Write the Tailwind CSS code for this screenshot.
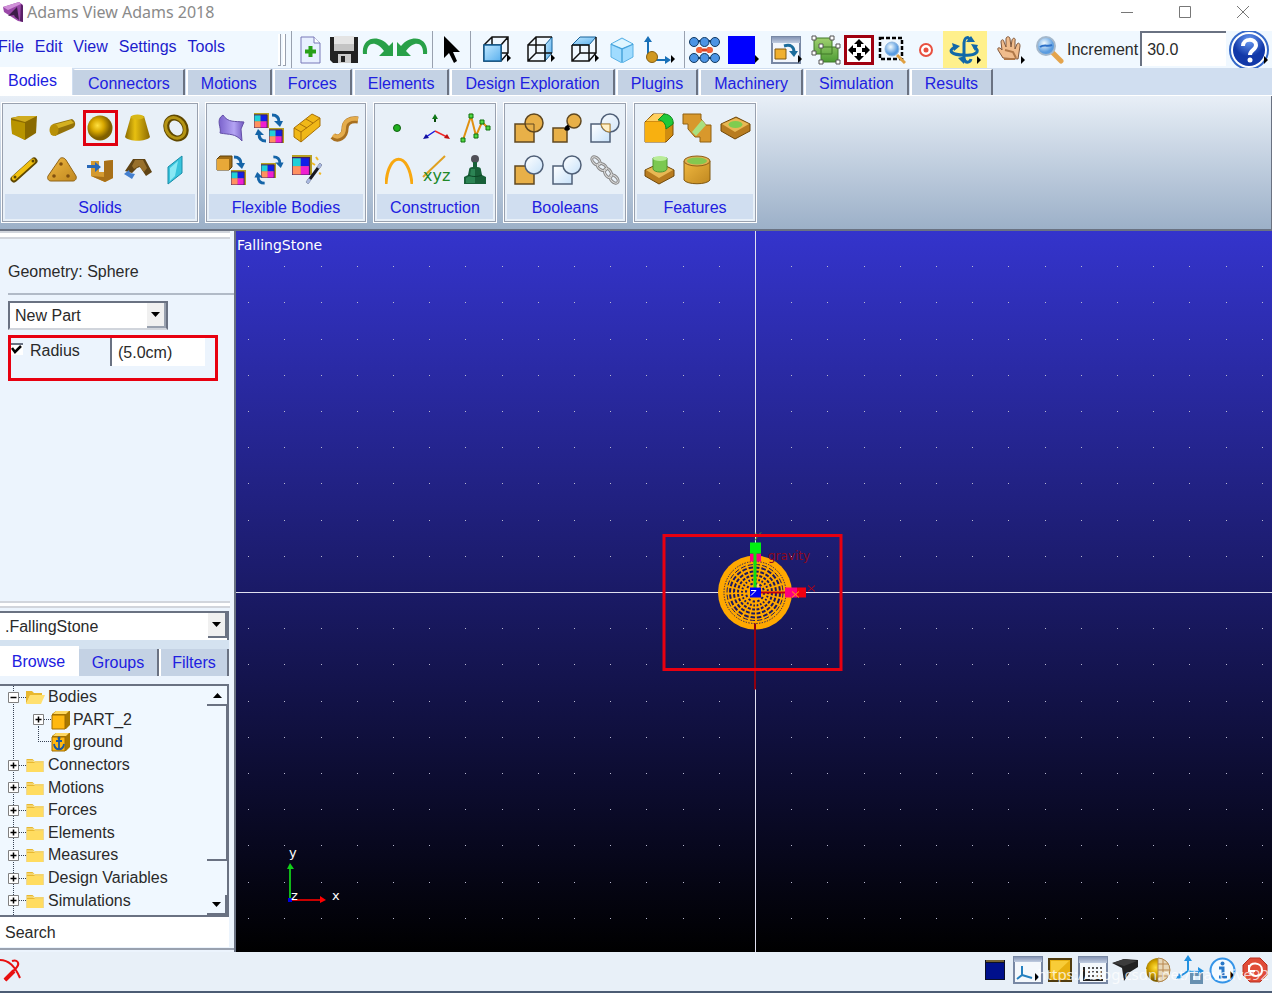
<!DOCTYPE html>
<html lang="en">
<head>
    <meta charset="UTF-8">
    <meta name="viewport" content="width=device-width, initial-scale=1.0">
    <title>Adams View Adams 2018</title>
    <script src="https://cdn.jsdelivr.net/npm/@tailwindcss/browser@4"></script>
</head>
<body class="font-['Liberation_Sans',Arial,sans-serif] text-base text-[#2a2a2a] bg-[#e8eef8] h-screen flex flex-col overflow-hidden">

    <!-- Shared icon parts -->
    <svg class="absolute w-0 h-0" aria-hidden="true">
        <defs>
            <linearGradient id="gold" x1="0" x2="1"><stop offset="0" stop-color="#8a6a00"/><stop offset=".4" stop-color="#e8c010"/><stop offset="1" stop-color="#8a6800"/></linearGradient>
            <linearGradient id="tan" x1="0" x2="1" y2="1"><stop offset="0" stop-color="#f0b840"/><stop offset="1" stop-color="#c08820"/></linearGradient>
            <radialGradient id="ball" cx=".4" cy=".4"><stop offset="0" stop-color="#ffe040"/><stop offset=".5" stop-color="#d8a800"/><stop offset="1" stop-color="#806000"/></radialGradient>
            <linearGradient id="ice" x1="0" x2="1" y2="1"><stop offset="0" stop-color="#fff"/><stop offset="1" stop-color="#c8e2fa"/></linearGradient>
            <linearGradient id="sky" x1="0" x2="1" y2="1"><stop offset="0" stop-color="#c0e8ff"/><stop offset="1" stop-color="#5ab0ee"/></linearGradient>
            <linearGradient id="leaf" x1="0" y1="0" x2="0" y2="1"><stop offset="0" stop-color="#a0d070"/><stop offset="1" stop-color="#4c9c34"/></linearGradient>
            <radialGradient id="lens" cx=".4" cy=".35"><stop offset="0" stop-color="#f4fcff"/><stop offset="1" stop-color="#5a9ce0"/></radialGradient>
            <radialGradient id="help" cx=".5" cy=".2"><stop offset="0" stop-color="#6a9cf4"/><stop offset="1" stop-color="#1238a8"/></radialGradient>
            <linearGradient id="violet" x1="0" x2="1"><stop offset="0" stop-color="#7a62cc"/><stop offset=".6" stop-color="#b4a4f4"/><stop offset="1" stop-color="#7058c0"/></linearGradient>
            <linearGradient id="wintop" x1="0" y1="0" x2="0" y2="1"><stop offset="0" stop-color="#8494b4"/><stop offset="1" stop-color="#c0cce0"/></linearGradient>
        </defs>
        <symbol id="swatch" viewBox="0 0 16 16">
            <rect width="16" height="16" fill="#b8a020"/><rect y="2" width="7" height="7" fill="#20d0d8"/><rect x="7" y="2" width="7" height="7" fill="#1020e8"/><rect y="9" width="7" height="7" fill="#ff9060"/><rect x="7" y="9" width="7" height="7" fill="#f020d0"/><path d="M0 2h14v14H0z" fill="none" stroke="#402060" stroke-width="1"/>
        </symbol>
        <symbol id="turn" viewBox="0 0 12 14">
            <path d="M1 2c5 0 7 3 7 7" fill="none" stroke="#1464a8" stroke-width="3"/><path d="M3 8h9l-3 6z" fill="#1464a8"/>
        </symbol>
        <symbol id="more" viewBox="0 0 4 8"><path d="M0 0l4 4-4 4z" fill="#000"/></symbol>
        <symbol id="folder" viewBox="0 0 18 16">
            <path d="M.5 2h6l2 2h9v11H.5z" fill="#e8b830"/><path d="M1 6h16v9H1z" fill="#ffdc60"/><path d="M1 4h6l2 1h8" stroke="#fff0a8" fill="none"/>
        </symbol>
        <symbol id="plus" viewBox="0 0 11 11"><path d="M.5.5h10v10H.5z" fill="#fff" stroke="#808080"/><path d="M2.500 5.500h6M5.500 2.500v6" stroke="#000" stroke-width="1.500"/></symbol>
        <symbol id="minus" viewBox="0 0 11 11"><path d="M.5.5h10v10H.5z" fill="#fff" stroke="#808080"/><path d="M2.500 5.500h6" stroke="#000" stroke-width="1.500"/></symbol>
        <symbol id="part" viewBox="0 0 20 20"><path d="M1 4l4-3h14v14l-4 4H1z" fill="#a87800"/><path d="M1 5h13v14H1z" fill="#ffb810" stroke="#a06c00"/><path d="M2 4l3-3h13l-3 3z" fill="#ffd860"/></symbol>
    </svg>

    <!-- Title bar -->
    <header class="h-[31px] shrink-0 bg-white flex items-start justify-between">
        <div class="flex items-center gap-1 pl-[3px] h-6">
            <svg class="w-5 h-5" viewBox="0 0 20 20"><path d="M0 5l16-5 4 3v17l-5-1L1 10z" fill="#9a48a8"/><path d="M0 5l16-5 2 2L5 8z" fill="#d090d8"/><path d="M5 14l9-9 2 13-4-3-1-2z" fill="#3c1c48"/><path d="M18 2l2 2v16l-3-1z" fill="#5a2068"/></svg>
            <h1 class="font-['Noto_Sans',sans-serif] text-base leading-6 text-[#8a8a8a]">Adams View Adams 2018</h1>
        </div>
        <div class="flex h-6 items-center pr-[7px]">
            <button aria-label="Minimize" class="px-[23px]"><svg class="w-3 h-3" viewBox="0 0 12 12"><path d="M0 6.500h12" stroke="#777"/></svg></button>
            <button aria-label="Maximize" class="px-[23px]"><svg class="w-3 h-3" viewBox="0 0 12 12"><path d="M.5.5h11v11H.5z" fill="none" stroke="#777"/></svg></button>
            <button aria-label="Close" class="pl-[23px] pr-4"><svg class="w-3 h-3" viewBox="0 0 12 12"><path d="M0 0l12 12M12 0L0 12" stroke="#777"/></svg></button>
        </div>
    </header>

    <!-- Menu and toolbar -->
    <div class="h-[37px] shrink-0 bg-[#f0f8ff] flex items-center overflow-hidden">
        <nav class="flex gap-[11px] w-[278px] shrink-0 pb-[6px] text-[#1c1ccc]">
            <a href="#" class="-ml-[2px]">File</a>
            <a href="#">Edit</a>
            <a href="#">View</a>
            <a href="#">Settings</a>
            <a href="#">Tools</a>
        </nav>
        <div class="flex gap-[2px] w-[13px] shrink-0 h-8"><i class="w-[3px] border-r border-b border-gray-400 bg-white"></i><i class="w-[3px] border-r border-b border-gray-400 bg-white"></i></div>

        <div class="flex h-full items-center border-l border-gray-400 pl-px pr-[3px] shrink-0">
            <button aria-label="New" class="w-[34px] flex justify-center"><svg class="w-[21px] h-7" viewBox="0 0 21 28"><path d="M1 1h13l6 6v20H1z" fill="#e8f0ff" stroke="#7878b8"/><path d="M14 1v6h6" fill="#fff" stroke="#7878b8"/><path d="M10.500 10v11M5 15.500h11" stroke="#28a018" stroke-width="4"/></svg></button>
            <button aria-label="Save" class="w-[34px] flex justify-center"><svg class="w-7 h-7" viewBox="0 0 28 28"><path d="M0 1h28v26H3l-3-3z" fill="#222"/><path d="M4 0h20v15H4z" fill="#e4e4e4"/><path d="M4 8h20v7H4z" fill="#c4c4c4"/><path d="M8 18h13v9H8z" fill="#ccc"/><path d="M11 20h4v6h-4z" fill="#222"/></svg></button>
            <button aria-label="Redo" class="w-[34px] flex justify-center"><svg class="w-8 h-7" viewBox="0 0 32 28"><path d="M1 18C-1 2 16-3 27 10l4-4v14H17l5-5C14 4 4 6 5 18z" fill="#28a048"/></svg></button>
            <button aria-label="Undo" class="w-[34px] flex justify-center"><svg class="w-8 h-7" viewBox="0 0 32 28"><path d="M31 18C33 2 16-3 5 10L1 6v14h14l-5-5C18 4 28 6 27 18z" fill="#28a048"/></svg></button>
        </div>
        <div class="flex h-full items-center border-l border-gray-400 w-[38px] justify-center shrink-0">
            <button aria-label="Select"><svg class="w-4 h-7" viewBox="0 0 16 28"><path d="M0 0v22l5-5 5 10 3-2-4-9h7z" fill="#000"/></svg></button>
        </div>
        <div class="flex h-full items-center border-l border-gray-400 pl-1 w-[214px] shrink-0">
            <button aria-label="Front view" class="w-11 flex justify-center"><svg class="w-7 h-7" viewBox="0 0 28 28"><path d="M1 9l8-8h16v16l-7 8H1zM18 9l7-8M9 1v16h16M9 17l-8 8M1 9h17v16" fill="none" stroke="#111" stroke-width="1.500"/><path d="M1 9h17v16H1z" fill="url(#sky)" stroke="#146098" stroke-width="1.500"/><use href="#more" x="24" y="18" width="4" height="8"/></svg></button>
            <button aria-label="Right view" class="w-11 flex justify-center"><svg class="w-7 h-7" viewBox="0 0 28 28"><path d="M18 9l7-8v16l-7 8z" fill="url(#sky)" stroke="#146098"/><path d="M1 9l8-8h16M1 9h17v16H1zM9 1v16h16M9 17l-8 8" fill="none" stroke="#111" stroke-width="1.500"/><use href="#more" x="24" y="18" width="4" height="8"/></svg></button>
            <button aria-label="Top view" class="w-11 flex justify-center"><svg class="w-7 h-7" viewBox="0 0 28 28"><path d="M1 9l8-8h16l-7 8z" fill="url(#sky)" stroke="#146098"/><path d="M1 9v16h17V9M25 1v16l-7 8M9 9v8h16M9 17l-8 8M1 9h17" fill="none" stroke="#111" stroke-width="1.500"/><use href="#more" x="24" y="18" width="4" height="8"/></svg></button>
            <button aria-label="Isometric view" class="w-[30px] flex justify-center"><svg class="w-6 h-[26px]" viewBox="0 0 24 26"><path d="M1 7l11-6 11 6v13l-11 6-11-6z" fill="#a0dcff" stroke="#58b0e4"/><path d="M1 7l11 5 11-5M12 12v13" stroke="#48a4dc" stroke-width="1.500" fill="none"/><path d="M2 7l10-5 10 5-10 4z" fill="#e0f6ff"/></svg></button>
            <button aria-label="View orientation" class="w-11 flex justify-center"><svg class="w-8 h-7" viewBox="0 0 32 28"><path d="M5 22V5M8 24h16" stroke="#1870b8" stroke-width="2" fill="none"/><path d="M1 6l4-6 4 6zM22 20l6 4-6 4z" fill="#1870b8"/><circle cx="9" cy="21" r="5.500" fill="#d09820" stroke="#886010"/><use href="#more" x="28" y="19" width="4" height="8"/></svg></button>
        </div>
        <div class="flex h-full items-center border-l border-gray-400 pl-[2px] shrink-0">
            <button aria-label="Grid" class="w-[34px] flex justify-center"><svg class="w-[31px] h-7" viewBox="0 0 31 28"><path d="M5 5h21M5 22h21" stroke="#123c70" stroke-width="2"/><path d="M9 14h13M11 11v6M20 11v6" stroke="#e04020" stroke-width="3"/><g fill="#4c94e4" stroke="#103860"><circle cx="5" cy="6" r="4.500"/><circle cx="15.500" cy="6" r="4.500"/><circle cx="26" cy="6" r="4.500"/><circle cx="5" cy="22" r="4.500"/><circle cx="15.500" cy="22" r="4.500"/><circle cx="26" cy="22" r="4.500"/></g><circle cx="10" cy="14" r="3" fill="#f06038"/><circle cx="21" cy="14" r="3" fill="#f06038"/></svg></button>
            <button aria-label="Background color" class="w-11 flex justify-center"><svg class="w-[31px] h-7" viewBox="0 0 31 28"><path d="M0 0h27v28H0z" fill="#00f"/><use href="#more" x="27" y="19" width="4" height="8"/></svg></button>
            <button aria-label="Render" class="w-11 flex justify-center"><svg class="w-8 h-7" viewBox="0 0 32 28"><path d="M1 1h28v26H1z" fill="#f2f6fc" stroke="#7888a4" stroke-width="2"/><path d="M1 1h28v6H1z" fill="url(#wintop)"/><path d="M4 13h11v10H4z" fill="#f0b030" stroke="#805810"/><path d="M13 10c7-2 10 1 10 6" fill="none" stroke="#1c6c9c" stroke-width="3"/><path d="M18 15h9l-4 6z" fill="#1c6c9c"/><use href="#more" x="27" y="19" width="4" height="8"/></svg></button>
            <button aria-label="Group" class="w-[34px] flex justify-center"><svg class="w-[30px] h-[30px]" viewBox="0 0 30 30"><path d="M3 3h18v16H3zM10 12h17v15H10z" fill="url(#leaf)" stroke="#407828"/><g fill="#fff" stroke="#555"><path d="M1 1h4v4H1zM19 1h4v4h-4zM1 16h4v4H1zM8 9h4v4H8zM25 9h4v4h-4zM8 25h4v4H8zM25 25h4v4h-4z"/></g></svg></button>
            <button aria-label="Fit view" class="w-8 flex justify-center"><svg class="w-[30px] h-[30px]" viewBox="0 0 30 30"><path d="M1.500 1.500h27v27h-27z" fill="#fff" stroke="#a00010" stroke-width="3"/><path d="M15 4l5 5h-3v3h-4V9h-3zM15 26l5-5h-3v-3h-4v3h-3zM4 15l5-5v3h3v4H9v3zM26 15l-5-5v3h-3v4h3v3z" fill="#000"/></svg></button>
            <button aria-label="Zoom box" class="w-[34px] flex justify-center"><svg class="w-7 h-7" viewBox="0 0 28 28"><path d="M2 2h22v21H2z" fill="none" stroke="#000" stroke-width="2.500" stroke-dasharray="4 2"/><path d="M19 19l8 8" stroke="#e0a040" stroke-width="3"/><circle cx="14" cy="13" r="7" fill="url(#lens)" stroke="#90b8e0"/></svg></button>
            <button aria-label="Center" class="w-[34px] flex justify-center"><svg class="w-3.5 h-3.5" viewBox="0 0 14 14"><circle cx="7" cy="7" r="6" fill="#fff" stroke="#e85040" stroke-width="2"/><circle cx="7" cy="7" r="2.500" fill="#e85040"/></svg></button>
            <button aria-label="Rotate" class="w-11 h-[37px] flex justify-center items-center bg-[#fff08c]"><svg class="w-8 h-8" viewBox="0 0 32 32"><path d="M21 8C20 2 16 2 15 9v15c1 6 6 5 7 1M6 13c-8 4-3 8 9 8 12 1 17-4 10-8" fill="none" stroke="#1268a8" stroke-width="3"/><path d="M17 8h9l-4-6zM3 9l8 3-6 5zM9 24l7-2-1 8zM22 10l7 1-3 6z" fill="#1268a8"/><use href="#more" x="28" y="22" width="4" height="8"/></svg></button>
            <button aria-label="Pan" class="w-12 flex justify-center"><svg class="w-7 h-7" viewBox="0 0 28 28"><path d="M6 22L1 14c-1-3 2-3 4 0L4 6c0-3 3-3 3 0l2 5V3c0-3 4-3 4 0l1 8 1-7c1-3 4-2 3 1v8l2-5c2-2 3 0 3 2l-2 13z" fill="#f0bc8c" stroke="#80583c"/><path d="M8 14l8 2 3 6M7 23h11" stroke="#b07848" fill="none" stroke-width="2"/><use href="#more" x="24" y="20" width="4" height="8"/></svg></button>
            <button aria-label="Zoom" class="w-[30px] flex justify-center"><svg class="w-7 h-7" viewBox="0 0 28 28"><path d="M16 16l9 9" stroke="#e4a44c" stroke-width="5" stroke-linecap="round"/><circle cx="10" cy="10" r="9" fill="url(#lens)" stroke="#a4b8cc" stroke-width="2"/><path d="M4 11c4-3 8 0 12-2" stroke="#2c70c8" stroke-width="2" fill="none"/></svg></button>
        </div>
        <label for="increment" class="pl-[2px] pr-[2px] shrink-0">Increment</label>
        <input id="increment" type="text" value="30.0" class="h-[35px] w-[86px] shrink-0 self-start border-t-2 border-l-2 border-gray-500 bg-white pl-[5px] outline-none">
        <button aria-label="Help" class="ml-[3px] shrink-0"><svg class="w-10 h-[38px]" viewBox="0 0 40 38"><circle cx="20" cy="19" r="19" fill="#fff" stroke="#3468c8" stroke-width="2"/><circle cx="20" cy="19" r="16" fill="url(#help)"/><path d="M14 15c0-8 13-8 13-1 0 5-6 5-6 10" fill="none" stroke="#fff" stroke-width="4"/><circle cx="21" cy="29" r="2.500" fill="#fff"/><use href="#more" x="35" y="25" width="4" height="8"/></svg></button>
    </div>

    <!-- Ribbon tabs -->
    <nav class="h-7 shrink-0 bg-[#d0def0] flex items-end gap-px text-[#2020e0] leading-7 border-b border-white">
        <a href="#" class="bg-white w-[72px] pl-2 h-7">Bodies</a>
        <a href="#" class="bg-[#c4d2e4] px-[13px] border-l-2 border-t border-[#c4d2e4] border-t-white border-r-2 border-r-gray-500 h-[26px]">Connectors</a>
        <a href="#" class="bg-[#c4d2e4] px-[13px] border-l-2 border-t border-white border-r-2 border-r-gray-500 h-[26px]">Motions</a>
        <a href="#" class="bg-[#c4d2e4] px-[13px] border-l-2 border-t border-white border-r-2 border-r-gray-500 h-[26px]">Forces</a>
        <a href="#" class="bg-[#c4d2e4] px-[13px] border-l-2 border-t border-white border-r-2 border-r-gray-500 h-[26px]">Elements</a>
        <a href="#" class="bg-[#c4d2e4] px-[13px] border-l-2 border-t border-white border-r-2 border-r-gray-500 h-[26px]">Design Exploration</a>
        <a href="#" class="bg-[#c4d2e4] px-[13px] border-l-2 border-t border-white border-r-2 border-r-gray-500 h-[26px]">Plugins</a>
        <a href="#" class="bg-[#c4d2e4] px-[13px] border-l-2 border-t border-white border-r-2 border-r-gray-500 h-[26px]">Machinery</a>
        <a href="#" class="bg-[#c4d2e4] px-[13px] border-l-2 border-t border-white border-r-2 border-r-gray-500 h-[26px]">Simulation</a>
        <a href="#" class="bg-[#c4d2e4] px-[13px] border-l-2 border-t border-white border-r-2 border-r-gray-500 h-[26px]">Results</a>
    </nav>

    <!-- Ribbon -->
    <div class="h-[135px] shrink-0 bg-linear-to-b from-[#e8eff7] to-[#9cb0c8] border-b-2 border-r border-gray-500 flex items-start gap-[6px] pt-[6px] pl-px">
        <section class="border border-white">
            <div class="border border-gray-400 bg-[#e8f0f8] p-[2px]">
                <div class="grid grid-cols-5 justify-items-center pt-px">
                    <button aria-label="Box" class="w-[38px] h-[42px] flex items-center justify-center"><svg class="w-7 h-7" viewBox="0 0 28 28"><path d="M1 4l9-2h17l-1 17-11 7-13-7z" fill="#8a6a00"/><path d="M1 6l14 3v17L2 20z" fill="#b89400"/><path d="M1 4l9-2h17l-12 6z" fill="#d0ac20"/></svg></button>
                    <button aria-label="Cylinder" class="w-[38px] h-[42px] flex items-center justify-center"><svg class="w-7 h-7" viewBox="0 0 28 28"><path d="M5 10l19-5c4 2 4 7 1 9L7 22z" fill="#94720a"/><path d="M5 11l18-5 3 3-18 6z" fill="#d4b020"/><ellipse cx="6" cy="16" rx="4.500" ry="6" fill="#b89008"/></svg></button>
                    <button aria-label="Sphere" class="w-[35px] h-9 my-[3px] flex items-center justify-center border-[3px] border-[#e00010]"><svg class="w-[26px] h-[26px]" viewBox="0 0 26 26"><circle cx="13" cy="13" r="12.500" fill="url(#ball)"/></svg></button>
                    <button aria-label="Frustum" class="w-[38px] h-[42px] flex items-center justify-center"><svg class="w-7 h-7" viewBox="0 0 28 28"><path d="M7 2h13l6 21c-4 5-21 5-25 0z" fill="url(#gold)"/><ellipse cx="13.500" cy="3" rx="6.500" ry="2.500" fill="#d8b818"/></svg></button>
                    <button aria-label="Torus" class="w-[38px] h-[42px] flex items-center justify-center"><svg class="w-7 h-7" viewBox="0 0 28 28"><ellipse cx="14" cy="14" rx="9" ry="11" transform="rotate(-35 14 14)" fill="none" stroke="#604800" stroke-width="6"/><ellipse cx="13.500" cy="13.500" rx="9" ry="11" transform="rotate(-35 14 14)" fill="none" stroke="#b49414" stroke-width="3"/></svg></button>
                    <button aria-label="Link" class="w-[38px] h-[42px] flex items-center justify-center"><svg class="w-7 h-7" viewBox="0 0 28 28"><path d="M4 23L24 5" stroke="#604800" stroke-width="7" stroke-linecap="round"/><path d="M4 22L23 5" stroke="#f0c010" stroke-width="4.500" stroke-linecap="round"/><circle cx="5" cy="21" r="1.500" fill="#604800"/><circle cx="23" cy="5" r="1.500" fill="#604800"/></svg></button>
                    <button aria-label="Plate" class="w-[38px] h-[42px] flex items-center justify-center"><svg class="w-[30px] h-7" viewBox="0 0 30 28"><path d="M12 4c1-3 5-3 7 0l10 16c1 3-1 5-3 5H4c-3 0-4-3-3-5z" fill="url(#tan)" stroke="#906418"/><g fill="#805010"><circle cx="14" cy="8" r="1.800"/><circle cx="7" cy="20" r="1.800"/><circle cx="21" cy="20" r="1.800"/></g></svg></button>
                    <button aria-label="Extrusion" class="w-[38px] h-[42px] flex items-center justify-center"><svg class="w-7 h-7" viewBox="0 0 28 28"><path d="M5 5h8v11h5V5l9-1v18l-8 4-14-6z" fill="#d49a30"/><path d="M18 5l9-1v18l-8 4-14-6 13 1z" fill="#a87018"/><path d="M1 9h8V6l6 5-6 5v-4H1z" fill="#2868b8"/></svg></button>
                    <button aria-label="Revolution" class="w-[38px] h-[42px] flex items-center justify-center"><svg class="w-7 h-7" viewBox="0 0 28 28"><path d="M9 3h12l7 13-6 4-6-9-3 1-5 5-7-2z" fill="#604414"/><path d="M11 4h8l4 8-3 4-5-6-5 3-2-3z" fill="#98702c"/><path d="M0 18l5-4 1 3 5 1-3 5z" fill="#4480d0"/></svg></button>
                    <button aria-label="Plane" class="w-[38px] h-[42px] flex items-center justify-center"><svg class="w-7 h-[30px]" viewBox="0 0 28 30"><path d="M6 12L20 1v17L6 29z" fill="#38c4dc" stroke="#188ca8"/><path d="M8 13l8-7-3 15-5 5z" fill="#88e8f4"/></svg></button>
                </div>
                <h2 class="bg-[#d0def0] mt-[3px] h-[25px] leading-[27px] text-center text-[#2020e0]">Solids</h2>
            </div>
        </section>

        <section class="border border-white">
            <div class="border border-gray-400 bg-[#e8f0f8] p-[2px]">
                <div class="grid grid-cols-4 pt-px px-px">
                    <button aria-label="Flexible surface" class="w-[38px] h-[42px] flex items-center justify-center pl-1"><svg class="w-7 h-7" viewBox="0 0 28 28"><path d="M6 1c5 8 12 6 21 7l-3 7 1 12c-7-8-12-6-22-8 2-5-5-13 3-18z" fill="url(#violet)" stroke="#6450a8"/></svg></button>
                    <button aria-label="Flex to flex" class="w-[38px] h-[42px] flex items-center justify-center pl-1"><svg class="w-[30px] h-[30px]" viewBox="0 0 30 30"><use href="#swatch" width="15" height="15"/><use href="#swatch" x="15" y="15" width="15" height="15"/><use href="#turn" x="17" y="0" width="12" height="14"/><use href="#turn" width="12" height="14" transform="translate(13 30) rotate(180)"/></svg></button>
                    <button aria-label="Beam" class="w-[38px] h-[42px] flex items-center justify-center pl-1"><svg class="w-7 h-[30px]" viewBox="0 0 28 30"><path d="M1 15L19 1l8 4v8L8 29l-7-5z" fill="#f0b818" stroke="#a87008"/><path d="M1 15l7 4L27 5M8 19v10M7 11l7 4M13 6l7 4" fill="none" stroke="#a87008"/></svg></button>
                    <button aria-label="Flexible link" class="w-[38px] h-[42px] flex items-center justify-center pl-1"><svg class="w-[30px] h-7" viewBox="0 0 30 28"><path d="M3 22c5 5 12 0 12-7S20 5 28 6" fill="none" stroke="#a87020" stroke-width="7"/><path d="M3 21c5 4 11 0 11-7S20 4 28 5" fill="none" stroke="#e4ac4c" stroke-width="4"/></svg></button>
                    <button aria-label="Rigid to flex" class="w-[38px] h-[42px] flex items-center justify-center pl-1"><svg class="w-[30px] h-[30px]" viewBox="0 0 30 30"><path d="M1 4l3-3h12v11l-3 3H1z" fill="#a06c14" stroke="#604008"/><path d="M1 4h12v11H1z" fill="#e8a838"/><use href="#swatch" x="15" y="15" width="15" height="15"/><use href="#turn" x="17" y="0" width="12" height="14"/></svg></button>
                    <button aria-label="Flex swap" class="w-[38px] h-[42px] flex items-center justify-center pl-1"><svg class="w-[30px] h-[30px]" viewBox="0 0 30 30"><use href="#swatch" x="7" y="8" width="15" height="15"/><use href="#turn" x="18" y="0" width="12" height="13"/><use href="#turn" width="12" height="13" transform="translate(12 30) rotate(180)"/></svg></button>
                    <button aria-label="Flex wizard" class="w-[38px] h-[42px] flex items-center justify-center pl-1"><svg class="w-[30px] h-[30px]" viewBox="0 0 30 30"><use href="#swatch" width="20" height="20"/><path d="M15 28L29 9" stroke="#181820" stroke-width="3"/><path d="M26 13l3-4M15 28l3-4" stroke="#a8b8e0" stroke-width="3"/><path d="M24 2l2 3M27 18l2 1M20 8l3 2" stroke="#f0b828" stroke-width="2"/></svg></button>
                </div>
                <h2 class="bg-[#d0def0] mt-[3px] h-[25px] leading-[27px] text-center text-[#2020e0]">Flexible Bodies</h2>
            </div>
        </section>

        <section class="border border-white">
            <div class="border border-gray-400 bg-[#e8f0f8] p-[2px]">
                <div class="grid grid-cols-3 pt-px px-px">
                    <button aria-label="Point" class="w-[38px] h-[42px] flex items-center justify-center"><svg class="w-2 h-2" viewBox="0 0 8 8"><circle cx="4" cy="4" r="3.500" fill="#20b020" stroke="#106010"/></svg></button>
                    <button aria-label="Marker" class="w-[38px] h-[42px] flex items-center justify-center pl-1"><svg class="w-7 h-7" viewBox="0 0 28 28"><path d="M12 3v5" stroke="#084808" stroke-width="2"/><path d="M9 5l3-5 3 5z" fill="#107818"/><path d="M12 17L3 23" stroke="#1818e0" stroke-width="1.500"/><path d="M0 25l3-5 3 4z" fill="#1010a0"/><path d="M12 17l12 6" stroke="#f02828" stroke-width="1.500"/><path d="M27 25l-3-5-3 4z" fill="#c01010"/></svg></button>
                    <button aria-label="Polyline" class="w-[38px] h-[42px] flex items-center justify-center pl-1"><svg class="w-[31px] h-[30px]" viewBox="0 0 31 30"><path d="M3 27l8-24 5 20 6-14 6 6" fill="none" stroke="#e09010" stroke-width="2"/><g fill="#50d840" stroke="#107010"><path d="M1 25h4v4H1zM9 1h4v4H9zM14 21h4v4h-4zM20 7h4v4h-4zM26 13h4v4h-4z"/></g></svg></button>
                    <button aria-label="Arc" class="w-[38px] h-[42px] flex items-center justify-center pl-1"><svg class="w-7 h-7" viewBox="0 0 28 28"><path d="M1 28C3-5 24-5 27 28" fill="none" stroke="#f8a810" stroke-width="3"/></svg></button>
                    <button aria-label="Spline" class="w-[38px] h-[42px] flex items-center justify-center pl-1"><svg class="w-[30px] h-[30px]" viewBox="0 0 30 30"><path d="M1 22L23 1" stroke="#e0a020" stroke-width="2"/><text x="1" y="26" font-size="16" fill="#208828" font-family="DejaVu Sans">xyz</text></svg></button>
                    <button aria-label="Point mass" class="w-[38px] h-[42px] flex items-center justify-center pl-1"><svg class="w-6 h-[30px]" viewBox="0 0 24 30"><circle cx="12" cy="4" r="4" fill="#505058"/><path d="M10 7h4v5c3 0 4 1 4 3l1 5 4 2v7H1v-7l4-2 1-5c0-2 1-3 4-3z" fill="#186038"/><path d="M8 14h4v14H3v-5l4-2z" fill="#2c8454"/><path d="M5 20c4 2 10 2 14 0" stroke="#0c4424" fill="none"/></svg></button>
                </div>
                <h2 class="bg-[#d0def0] mt-[3px] h-[25px] leading-[27px] text-center text-[#2020e0]">Construction</h2>
            </div>
        </section>

        <section class="border border-white">
            <div class="border border-gray-400 bg-[#e8f0f8] p-[2px]">
                <div class="grid grid-cols-3 pt-px px-px">
                    <button aria-label="Unite" class="w-[38px] h-[42px] flex items-center justify-center pl-1"><svg class="w-[30px] h-[30px]" viewBox="0 0 30 30"><g fill="#e8b048" stroke="#604820" stroke-width="1.500"><path d="M1 11h19v18H1z"/><circle cx="20" cy="10" r="9"/></g><path d="M11 11h9v8" fill="none" stroke="#604820"/></svg></button>
                    <button aria-label="Merge" class="w-[38px] h-[42px] flex items-center justify-center pl-1"><svg class="w-[30px] h-[30px]" viewBox="0 0 30 30"><g fill="#e8b048" stroke="#604820" stroke-width="1.500"><path d="M1 15h14v14H1z"/><circle cx="22" cy="8" r="7"/></g><path d="M13 17l4-4M14 13l3 4" stroke="#000" stroke-width="3"/></svg></button>
                    <button aria-label="Intersect" class="w-[38px] h-[42px] flex items-center justify-center pl-1"><svg class="w-[30px] h-[30px]" viewBox="0 0 30 30"><g fill="url(#ice)" stroke="#506078" stroke-width="1.500"><path d="M1 11h19v18H1z"/><circle cx="20" cy="10" r="9" fill-opacity=".6"/></g><path d="M11 11h9v8c-5 0-8-4-9-8z" fill="#fff0c8" stroke="#b88830"/></svg></button>
                    <button aria-label="Cut" class="w-[38px] h-[42px] flex items-center justify-center pl-1"><svg class="w-[30px] h-[30px]" viewBox="0 0 30 30"><path d="M1 11h19v18H1z" fill="#e8b048" stroke="#604820" stroke-width="1.500"/><circle cx="20" cy="10" r="9" fill="url(#ice)" stroke="#506078" stroke-width="1.500"/></svg></button>
                    <button aria-label="Split" class="w-[38px] h-[42px] flex items-center justify-center pl-1"><svg class="w-[30px] h-[30px]" viewBox="0 0 30 30"><g fill="url(#ice)" stroke="#506078" stroke-width="1.500"><path d="M1 11h19v18H1z"/><circle cx="20" cy="10" r="9"/></g></svg></button>
                    <button aria-label="Chain" class="w-[38px] h-[42px] flex items-center justify-center pl-1"><svg class="w-[30px] h-[30px]" viewBox="0 0 30 30"><g fill="none" stroke="#888" stroke-width="3"><ellipse cx="6" cy="6" rx="5" ry="3" transform="rotate(45 6 6)"/><ellipse cx="12" cy="12" rx="5" ry="3" transform="rotate(30 12 12)"/><ellipse cx="18" cy="18" rx="5" ry="3" transform="rotate(60 18 18)"/><ellipse cx="24" cy="24" rx="5" ry="3" transform="rotate(45 24 24)"/></g><g fill="none" stroke="#ddd"><ellipse cx="6" cy="6" rx="5" ry="3" transform="rotate(45 6 6)"/><ellipse cx="12" cy="12" rx="5" ry="3" transform="rotate(30 12 12)"/><ellipse cx="18" cy="18" rx="5" ry="3" transform="rotate(60 18 18)"/><ellipse cx="24" cy="24" rx="5" ry="3" transform="rotate(45 24 24)"/></g></svg></button>
                </div>
                <h2 class="bg-[#d0def0] mt-[3px] h-[25px] leading-[27px] text-center text-[#2020e0]">Booleans</h2>
            </div>
        </section>

        <section class="border border-white">
            <div class="border border-gray-400 bg-[#e8f0f8] p-[2px]">
                <div class="grid grid-cols-3 pt-px px-px">
                    <button aria-label="Fillet" class="w-[38px] h-[42px] flex items-center justify-center pl-1"><svg class="w-[30px] h-[30px]" viewBox="0 0 30 30"><path d="M1 9l8-8h12l8 8v13l-7 7H1z" fill="#d08c10" stroke="#805008"/><path d="M1 9h20v20H1z" fill="#f8b010"/><path d="M2 8l8-7h10l-5 7z" fill="#ffd060"/><path d="M14 7l6-6c6 0 10 5 9 10l-7 5c0-5-3-9-8-9z" fill="#20c838" stroke="#108820"/></svg></button>
                    <button aria-label="Chamfer" class="w-[38px] h-[42px] flex items-center justify-center pl-1"><svg class="w-[30px] h-[30px]" viewBox="0 0 30 30"><path d="M1 1h18v5l5 6h5v17H18v-5h-5l-7-8v-5H1z" fill="#d8982c" stroke="#906010"/><path d="M20 7l4 5-10 11-4-4z" fill="#a8e080"/></svg></button>
                    <button aria-label="Hole" class="w-[38px] h-[42px] flex items-center justify-center pl-1"><svg class="w-[31px] h-6" viewBox="0 0 31 24"><path d="M1 8l15-7 14 7v7l-15 8-14-8z" fill="#b87c20" stroke="#704808"/><path d="M2 8l14-6 13 6-14 8z" fill="#e8b854"/><ellipse cx="15.500" cy="8.500" rx="7" ry="3.500" fill="#80cc50"/></svg></button>
                    <button aria-label="Boss" class="w-[38px] h-[42px] flex items-center justify-center pl-1"><svg class="w-[31px] h-[30px]" viewBox="0 0 31 30"><path d="M1 15l15-7 14 7v6l-15 8-14-8z" fill="#b87c20" stroke="#704808"/><path d="M2 15l14-6 13 6-14 8z" fill="#e8b854"/><path d="M9 3v11c1 4 13 4 14 0V3z" fill="#7cc850" stroke="#509830"/><ellipse cx="16" cy="3.500" rx="7" ry="2.500" fill="#b8ec98"/></svg></button>
                    <button aria-label="Hollow" class="w-[38px] h-[42px] flex items-center justify-center pl-1"><svg class="w-7 h-[30px]" viewBox="0 0 28 30"><path d="M1 6v19c3 5 23 5 26 0V6z" fill="url(#tan)" stroke="#805810"/><ellipse cx="14" cy="6" rx="13" ry="5" fill="#e0b050" stroke="#906018"/><ellipse cx="14" cy="6" rx="10" ry="3.500" fill="#84c850"/></svg></button>
                </div>
                <h2 class="bg-[#d0def0] mt-[3px] h-[25px] leading-[27px] text-center text-[#2020e0]">Features</h2>
            </div>
        </section>
    </div>

    <main class="flex-1 min-h-0 flex">
        <!-- Side panel -->
        <aside class="w-[236px] shrink-0 flex flex-col bg-[#ecf4fd] border-r-2 border-gray-500">
            <div class="h-2 mr-1 shrink-0 border-y-2 border-gray-300 bg-white"></div>
            <div class="pl-2 flex-1">
                <p class="h-[56px] pt-5 leading-[26px] border-b-2 border-gray-400/70">Geometry: Sphere</p>
                <div class="relative w-40 mt-[6px]">
                    <select aria-label="Part" class="appearance-none block w-full h-[29px] bg-white border-2 border-gray-500 border-b-gray-300 pl-[5px] pt-px outline-none">
                        <option>New Part</option>
                    </select>
                    <span class="pointer-events-none absolute right-[2px] top-[2px] w-[19px] h-[25px] bg-[#f0f0f0] border-r-2 border-b-2 border-gray-400 flex items-center justify-center"><svg class="w-[9px] h-[5px]" viewBox="0 0 9 5"><path d="M0 0h9L4.500 5z"/></svg></span>
                </div>
                <div class="mt-[5px] w-[210px] h-[46px] border-[3px] border-[#e80010] flex items-start">
                    <span class="relative mt-[5px] w-3 h-3">
                        <input id="radius-on" type="checkbox" checked class="appearance-none block w-3 h-3 bg-white border-t-2 border-gray-500">
                        <svg class="pointer-events-none absolute inset-0 w-3 h-3" viewBox="0 0 12 12"><path d="M1 5l3 4 6-6" fill="none" stroke="#000" stroke-width="2.500"/></svg>
                    </span>
                    <label for="radius-on" class="w-[87px] pl-[7px] leading-[26px]">Radius</label>
                    <input aria-label="Radius value" type="text" value="(5.0cm)" class="w-[95px] h-7 bg-white border-l-2 border-gray-500 pl-[6px] pt-[2px] outline-none">
                </div>
            </div>
            <div class="h-[7px] mr-1 shrink-0 border-y-2 border-gray-300 bg-white"></div>
            <div class="relative mr-[5px] mt-[3px]">
                <select aria-label="Model" class="appearance-none block w-full h-[29px] bg-white border-t-2 border-r-2 border-gray-500 pl-[5px] outline-none">
                    <option>.FallingStone</option>
                </select>
                <span class="pointer-events-none absolute right-[2px] top-[2px] w-[19px] h-[25px] bg-[#f0f0f0] border-r-2 border-b-2 border-gray-500 flex items-center justify-center"><svg class="w-[9px] h-[5px]" viewBox="0 0 9 5"><path d="M0 0h9L4.500 5z"/></svg></span>
            </div>
            <nav class="h-9 mr-[5px] shrink-0 bg-[#d4e2f0] flex items-end text-[#2020e0]">
                <a href="#" class="bg-white w-[79px] text-center h-[30px] leading-8 pr-[2px]">Browse</a>
                <a href="#" class="flex-1 text-center bg-[#c4d2e4] h-[27px] leading-[27px] border-r-2 border-gray-500">Groups</a>
                <a href="#" class="w-[70px] text-center bg-[#c4d2e4] h-[27px] leading-[27px] border-l-2 border-l-white border-r-2 border-gray-500">Filters</a>
            </nav>
            <div class="h-[231px] mt-2 mr-[5px] shrink-0 border-t-2 border-r-2 border-gray-500 bg-[#f0f8ff] flex overflow-hidden">
                <div class="relative flex-1">
                    <span class="absolute left-[13px] inset-y-0 border-l border-dotted border-gray-700"></span>
                    <ul class="relative h-[226px] flex flex-col leading-5 [&>li]:flex-1 [&>li]:min-h-0 [&>li]:flex [&>li]:items-center [&>li]:pl-2">
                        <li><svg class="w-[11px] h-[11px]"><use href="#minus"/></svg><i class="w-[7px] border-t border-dotted border-gray-700"></i><svg class="w-[19px] h-4" viewBox="0 0 19 16"><path d="M0 2h6l2 2h8v3H4L0 15z" fill="#e8b830"/><path d="M4 6h15l-4 9H0z" fill="#ffe070"/></svg><span class="pl-[3px]">Bodies</span></li>
                        <li><svg class="w-[11px] h-[11px] ml-[25px]"><use href="#plus"/></svg><i class="w-[7px] border-t border-dotted border-gray-700"></i><svg class="w-5 h-5"><use href="#part"/></svg><span class="pl-[2px]">PART_2</span></li>
                        <li><i class="w-[13px] h-4 ml-[30px] -mt-4 border-l border-b border-dotted border-gray-700"></i><svg class="w-5 h-5" viewBox="0 0 20 20"><use href="#part"/><path d="M8 7v10M3 12c1 7 9 7 10 0M5 9h6" fill="none" stroke="#1c58a0" stroke-width="1.800"/><circle cx="8" cy="6" r="1.500" fill="#1c58a0"/></svg><span class="pl-[2px]">ground</span></li>
                        <li><svg class="w-[11px] h-[11px]"><use href="#plus"/></svg><i class="w-[7px] border-t border-dotted border-gray-700"></i><svg class="w-[18px] h-4"><use href="#folder"/></svg><span class="pl-1">Connectors</span></li>
                        <li><svg class="w-[11px] h-[11px]"><use href="#plus"/></svg><i class="w-[7px] border-t border-dotted border-gray-700"></i><svg class="w-[18px] h-4"><use href="#folder"/></svg><span class="pl-1">Motions</span></li>
                        <li><svg class="w-[11px] h-[11px]"><use href="#plus"/></svg><i class="w-[7px] border-t border-dotted border-gray-700"></i><svg class="w-[18px] h-4"><use href="#folder"/></svg><span class="pl-1">Forces</span></li>
                        <li><svg class="w-[11px] h-[11px]"><use href="#plus"/></svg><i class="w-[7px] border-t border-dotted border-gray-700"></i><svg class="w-[18px] h-4"><use href="#folder"/></svg><span class="pl-1">Elements</span></li>
                        <li><svg class="w-[11px] h-[11px]"><use href="#plus"/></svg><i class="w-[7px] border-t border-dotted border-gray-700"></i><svg class="w-[18px] h-4"><use href="#folder"/></svg><span class="pl-1">Measures</span></li>
                        <li><svg class="w-[11px] h-[11px]"><use href="#plus"/></svg><i class="w-[7px] border-t border-dotted border-gray-700"></i><svg class="w-[18px] h-4"><use href="#folder"/></svg><span class="pl-1">Design Variables</span></li>
                        <li><svg class="w-[11px] h-[11px]"><use href="#plus"/></svg><i class="w-[7px] border-t border-dotted border-gray-700"></i><svg class="w-[18px] h-4"><use href="#folder"/></svg><span class="pl-1">Simulations</span></li>
                    </ul>
                </div>
                <div class="w-5 flex flex-col justify-between">
                    <button aria-label="Scroll up" class="h-5 border-b-2 border-gray-500 flex items-center justify-center"><svg class="w-[9px] h-[5px]" viewBox="0 0 9 5"><path d="M0 5h9L4.500 0z"/></svg></button>
                    <span class="h-[155px] border-b-2 border-r border-gray-500"></span>
                    <button aria-label="Scroll down" class="mt-auto h-5 border-b-2 border-r-2 border-gray-500 flex items-center justify-center"><svg class="w-[9px] h-[5px]" viewBox="0 0 9 5"><path d="M0 0h9L4.500 5z"/></svg></button>
                </div>
            </div>
            <input aria-label="Search" type="text" value="Search" class="h-8 shrink-0 mr-[5px] border-t-2 border-gray-500 bg-white pl-[5px] pt-px outline-none">
            <div class="h-[3px] shrink-0 border-b-2 border-gray-400 mb-[2px]"></div>
        </aside>

        <!-- Model view -->
        <svg id="view" class="flex-1 min-w-0 h-full bg-linear-to-b/srgb from-[#3434cc] to-black font-['DejaVu_Sans',sans-serif] text-[13px]">
            <text x="1" y="19" class="text-sm" fill="#fff">FallingStone</text>
            <g id="dots" fill="#b8b8d0"></g>
            <path id="axes" stroke="#e0e0f0" fill="none"/>
            <svg x="50%" y="50%" overflow="visible">
                <g transform="translate(1 1)">
                    <circle r="37" fill="#ffa800"/>
                    <g fill="none" stroke="#1c1860" stroke-width="2">
                        <circle r="9" pathLength="12" stroke-dasharray=".5 .5"/>
                        <circle r="13" pathLength="24" stroke-dasharray=".5 .5"/>
                        <circle r="17" pathLength="24" stroke-dasharray=".65 .35"/>
                        <circle r="21" pathLength="24" stroke-dasharray=".7 .3"/>
                        <circle r="25" pathLength="24" stroke-dasharray=".7 .3"/>
                        <circle r="28" stroke-width="1" pathLength="24" stroke-dasharray=".7 .3"/>
                        <circle r="31" stroke-width="1" pathLength="72" stroke-dasharray=".5 .5"/>
                    </g>
                    <path d="M0 31v66" stroke="#900010" stroke-width="2"/>
                    <path d="M0-40V-4" stroke="#10e010" stroke-width="3"/>
                    <path d="M0 0h32" stroke="#c00010" stroke-width="2"/>
                    <path d="M-5-39H6v8H-5zM30-5h12V5H30z" fill="#ff0080"/>
                    <path d="M-5-50H6v11H-5z" fill="#00f010"/><path d="M0-40v12" stroke="#10e010" stroke-width="3"/>
                    <path d="M42-5h9V5h-9z" fill="#f00010"/>
                    <path d="M-5-5H6V5H-5z" fill="#0000f0"/>
                    <path d="M-4-2h5l-5 5M3-9v4" stroke="#fff" fill="none"/>
                    <path d="M37-1l7 6m0-6l-7 6" stroke="#ffa800"/>
                    <path d="M53-7l7 6m0-6l-7 6" stroke="#c80010"/>
                    <path d="M0-60l3 3 3-3M3-57l-3 5" stroke="#40a030" fill="none"/>
                    <text x="13" y="-33" class="text-xs" fill="#8c0820">gravity</text>
                    <path d="M-91-57H86V77H-91z" fill="none" stroke="#e80010" stroke-width="3"/>
                </g>
            </svg>
            <svg y="100%" overflow="visible">
                <path d="M54-53v-31" stroke="#10b818" stroke-width="2"/><path d="M51-83l3-6 4 6z" fill="#10d018"/>
                <path d="M54-52h31" stroke="#c80000" stroke-width="2"/><path d="M84-56l6 4-6 3z" fill="#f00"/>
                <path d="M52-54h4v4h-4z" fill="#0000e0"/>
                <text x="53" y="-95" fill="#fff">y</text>
                <text x="96" y="-52" fill="#fff">x</text>
                <text x="55" y="-52" fill="#fff">z</text>
            </svg>
        </svg>
    </main>

    <!-- Status bar -->
    <footer class="relative h-[41px] shrink-0 bg-[#e8f0f8] border-b-2 border-[#4c5c74] flex items-center justify-between pb-[3px]">
        <button aria-label="Clear"><svg class="w-[22px] h-6" viewBox="0 0 22 24"><path d="M0 2c9 0 15 6 20 18M5 22L17 9c3-4 0-8-5-6" fill="none" stroke="#e81010" stroke-width="2"/><path d="M5 22l9-9" stroke="#e81010" stroke-width="4"/></svg></button>
        <div class="flex items-center justify-between w-[292px] mr-px [&>button]:w-8 [&>button]:flex [&>button]:justify-center">
            <button aria-label="Background"><svg class="w-5 h-5" viewBox="0 0 20 20"><path d="M0 0h20v20H0z" fill="#0c1028"/><path d="M1 3h18v16H1z" fill="#00108c"/><path d="M1 1h18" stroke="#d8b040"/></svg></button>
            <button aria-label="Triad"><svg class="w-[30px] h-7" viewBox="0 0 30 28"><path d="M1 1h28v26H1z" fill="#f4f8fc" stroke="#7888a4" stroke-width="2"/><path d="M1 1h28v5H1z" fill="url(#wintop)"/><path d="M9 10v9l-5 4M9 19l10 3" stroke="#2480c0" stroke-width="2" fill="none"/><use href="#more" x="22" y="17" width="4" height="8"/></svg></button>
            <button aria-label="Shade"><svg class="w-6 h-6" viewBox="0 0 24 24"><path d="M1 1h22v22H1z" fill="#e8b010" stroke="#503c10" stroke-width="2"/><path d="M3 3h18L3 20z" fill="#f8cc38"/></svg></button>
            <button aria-label="Working grid"><svg class="w-[30px] h-7" viewBox="0 0 30 28"><path d="M1 1h28v26H1z" fill="#f4f8fc" stroke="#7888a4" stroke-width="2"/><path d="M1 1h28v6H1z" fill="url(#wintop)"/><path d="M6 11v13h19" stroke="#222" fill="none" stroke-width="2"/><path d="M10 12h15M10 16h15M10 20h15" stroke="#555" stroke-width="2" stroke-dasharray="2 2"/></svg></button>
            <button aria-label="Perspective"><svg class="w-[26px] h-6" viewBox="0 0 26 24"><path d="M0 5l12-4 14 1v7l-8 5-6 9-2-13z" fill="#222"/><path d="M1 5l11-4 13 2-13 5z" fill="#3c3c3c"/></svg></button>
            <button aria-label="Wireframe"><svg class="w-[26px] h-[26px]" viewBox="0 0 26 26"><circle cx="13" cy="13" r="12" fill="url(#ball)"/><path d="M13 1a12 12 0 010 24z" fill="#e8d8b8" stroke="#b08850"/><path d="M13 7h10M13 13h12M13 19h10M18 2v22" stroke="#b88850" fill="none"/></svg></button>
            <button aria-label="Icons"><svg class="w-7 h-[30px]" viewBox="0 0 28 30"><path d="M12 16V5M12 16L3 22M12 16h11" stroke="#2090e0" stroke-width="2" fill="none"/><path d="M8 6l4-6 4 6zM0 24l3-6 3 5zM22 12l6 4-6 4z" fill="#2090e0"/><path d="M14 18h13v11H14z" fill="#6890b0"/><path d="M17 21h7v4h-7z" fill="#d8ecf8"/></svg></button>
            <button aria-label="Information"><svg class="w-[27px] h-[27px]" viewBox="0 0 27 27"><circle cx="13.500" cy="13.500" r="12" fill="#f4faff" stroke="#3494e8" stroke-width="2"/><path d="M10 11h4v9m-4 0h8" stroke="#2878c8" stroke-width="3" fill="none"/><circle cx="13.500" cy="6.500" r="2" fill="#2878c8"/><use href="#more" x="21" y="14" width="4" height="8"/></svg></button>
            <button aria-label="Stop"><svg class="w-[26px] h-[26px]" viewBox="0 0 26 26"><path d="M8 1h10l7 7v10l-7 7H8l-7-7V8z" fill="#e04c38" stroke="#b83020"/><path d="M7 12c0-8 13-7 13 1 0 7-9 8-12 2M7 8v6h6" fill="none" stroke="#fff" stroke-width="2"/></svg></button>
        </div>
        <span class="pointer-events-none absolute right-[3px] top-2 leading-7 text-white/75 font-['Noto_Sans',sans-serif] text-[15px]">https://blog.csdn.net/Travelive92</span>
    </footer>

    <script>
        const view = document.getElementById("view");
        const dots = document.getElementById("dots");
        const axes = document.getElementById("axes");
        const pitch = 36.2;

        function drawGrid() {
            const box = view.getBoundingClientRect();
            const w = box.width;
            const h = box.height;
            const cx = Math.round(w / 2) + 1;
            const cy = Math.round(h / 2);
            let out = "";
            // first row sits below the model name
            for (let j = -Math.floor((cy - 30) / pitch); j * pitch + cy < h - 10; j++) {
                for (let i = -Math.floor(cx / pitch); i * pitch + cx < w; i++) {
                    out += `<rect x="${Math.round(cx + i * pitch)}" y="${Math.round(cy + j * pitch)}" width="1" height="1"/>`;
                }
            }
            dots.innerHTML = out;
            axes.setAttribute("d", `M${cx + 0.5} 0V${h}M0 ${cy + 0.5}H${w}`);
        }

        new ResizeObserver(drawGrid).observe(view);
        window.addEventListener("load", drawGrid);
        drawGrid();
    </script>
</body>
</html>
